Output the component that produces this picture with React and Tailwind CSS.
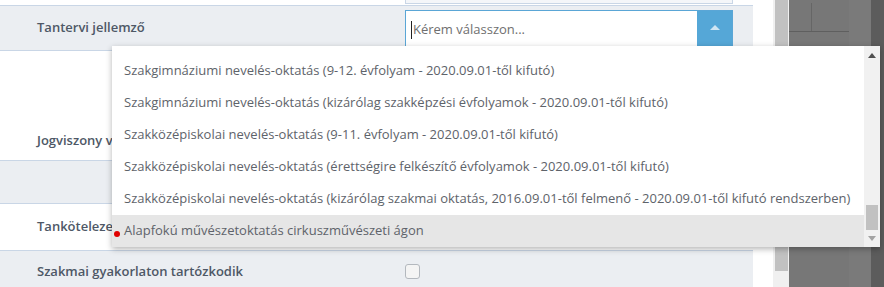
import React from "react";

const items = [
  "Szakgimnáziumi nevelés-oktatás (érettségire felkészítő évfolyamok - 2020.09.01-től kifutó)",
  "Szakgimnáziumi nevelés-oktatás (9-12. évfolyam - 2020.09.01-től kifutó)",
  "Szakgimnáziumi nevelés-oktatás (kizárólag szakképzési évfolyamok - 2020.09.01-től kifutó)",
  "Szakközépiskolai nevelés-oktatás (9-11. évfolyam - 2020.09.01-től kifutó)",
  "Szakközépiskolai nevelés-oktatás (érettségire felkészítő évfolyamok - 2020.09.01-től kifutó)",
  "Szakközépiskolai nevelés-oktatás (kizárólag szakmai oktatás, 2016.09.01-től felmenő - 2020.09.01-től kifutó rendszerben)",
  "Alapfokú művészetoktatás cirkuszművészeti ágon",
];

function Label({ children }) {
  return (
    <div className="w-[405px] pl-[37px] text-[13px] font-semibold text-[#4e5866]">
      {children}
    </div>
  );
}

export default function App() {
  return (
    <div
      className="relative flex w-[884px] h-[287px] overflow-hidden bg-white"
      style={{ fontFamily: '"Open Sans", "Noto Sans", sans-serif' }}
    >
      {/* main content */}
      <div className="w-[773px] flex flex-col bg-white">
        <div className="w-[753px] flex flex-col">
          {/* previous row remnant */}
          <div className="h-[6px] flex border-b border-[#c9d6e6] bg-white">
            <div className="ml-[405px] w-[328px] h-[4px] bg-[#f4f6f9] border-b border-x border-[#c9d6e6]" />
          </div>
          {/* Tantervi jellemző */}
          <div className="h-[45px] flex items-center bg-[#ebeef2] border-b border-[#c9d6e6]">
            <Label>Tantervi jellemző</Label>
            <div className="self-start mt-[4px] w-[328px] h-[40px] flex border border-[#5aa6d6] bg-white">
              <div className="flex-1 flex items-center pl-[5px] text-[13px] text-[#6f6f6f]">
                <span className="w-px h-[18px] bg-[#222] mr-[1px]" />
                Kérem válasszon...
              </div>
              <div className="w-[35px] bg-[#55a7d7] flex justify-center pt-[14px]">
                <svg width="10" height="5" viewBox="0 0 10 5">
                  <path d="M0 5 L5 0 L10 5 Z" fill="#cfe5f3" />
                </svg>
              </div>
            </div>
          </div>
          {/* Jogviszony */}
          <div className="h-[110px] flex items-end pb-[10px] bg-white border-b border-[#c9d6e6]">
            <Label>Jogviszony változás</Label>
          </div>
          {/* empty gray */}
          <div className="h-[43px] bg-[#ebeef2] border-b border-[#c9d6e6]" />
          {/* Tankötelezett */}
          <div className="h-[47px] flex items-center bg-white border-b border-[#c9d6e6]">
            <Label>Tankötelezettség</Label>
          </div>
          {/* Szakmai gyakorlaton */}
          <div className="h-[40px] flex items-start pt-[11px] bg-[#ebeef2]">
            <Label>Szakmai gyakorlaton tartózkodik</Label>
            <div className="mt-[2px] w-[15px] h-[15px] rounded-[3px] border border-[#b3b8be] bg-[#f4f4f4]" />
          </div>
        </div>
      </div>

      {/* page scrollbar */}
      <div className="w-[16px] bg-[#f0f0f0] flex">
        <div className="ml-[2px] w-[13px] h-[271px] bg-[#c1c1c1]" />
      </div>

      {/* dark backdrop area */}
      <div className="flex-1 flex bg-[#777777]">
        <div className="w-[60px] flex flex-col">
          <div className="h-[32px] flex border-b border-[#5f5f5f]">
            <div className="ml-[22px] mt-[3px] w-px bg-[#666]" />
          </div>
        </div>
        <div className="w-[22px] bg-[#7a7a7a]" />
        <div className="flex-1 bg-[#5c5c5c]" />
      </div>

      {/* dropdown list */}
      <div className="absolute left-[112px] top-[46px] w-[768px] h-[201px] flex bg-white shadow-[0_2px_6px_rgba(0,0,0,0.3)]">
        <div className="flex-1 overflow-hidden">
          <div className="-mt-[23px] flex flex-col">
            {items.map((t, i) => (
              <div
                key={i}
                className={
                  "h-[32px] flex items-center pl-[12px] text-[13px] text-[#5e636a] whitespace-nowrap " +
                  (i === items.length - 1 ? "bg-[#e6e6e6]" : "")
                }
              >
                {t}
              </div>
            ))}
          </div>
        </div>
        <div className="w-[16px] bg-[#f1f1f1] flex flex-col items-center">
          <svg className="mt-[7px]" width="8" height="5" viewBox="0 0 8 5">
            <path d="M0 5 L4 0 L8 5 Z" fill="#505050" />
          </svg>
          <div className="mt-[147px] w-[12px] h-[25px] bg-[#c1c1c1]" />
          <svg className="mt-[6px]" width="8" height="5" viewBox="0 0 8 5">
            <path d="M0 0 L8 0 L4 5 Z" fill="#a3a3a3" />
          </svg>
        </div>
        <div className="absolute left-[2px] top-[185px] w-[6px] h-[6px] rounded-full bg-[#e00000]" />
      </div>
    </div>
  );
}
